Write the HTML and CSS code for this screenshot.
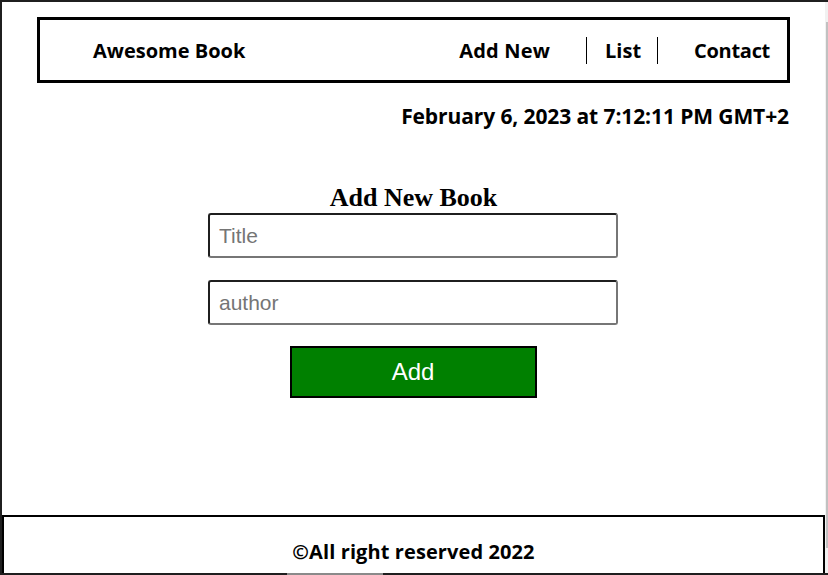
FILE: index.html
```html
<!DOCTYPE html>
<html lang="en">
<head>
<meta charset="utf-8">
<title>Awesome Book</title>
<link rel="stylesheet" href="styles.css">
</head>
<body>
<div class="window">
  <div class="page">
    <header class="header">
      <h1 class="logo">Awesome Book</h1>
      <nav>
        <ul class="nav">
          <li class="nav-item nav-add">Add New</li>
          <li class="nav-item nav-list">List</li>
          <li class="nav-item nav-contact">Contact</li>
        </ul>
      </nav>
    </header>
    <p class="date">February 6, 2023 at 7:12:11 PM GMT+2</p>
    <section class="add-section">
      <h2 class="add-title">Add New Book</h2>
      <form class="form">
        <input class="field" type="text" placeholder="Title">
        <input class="field" type="text" placeholder="author">
        <button class="add-btn" type="button">Add</button>
      </form>
    </section>
    <footer class="footer">
      <p class="copy">©All right reserved 2022</p>
    </footer>
  </div>
  <div class="vscroll"><div class="vthumb"></div></div>
</div>
<div class="hscroll"><div class="hthumb"></div></div>
</body>
</html>
```

FILE: styles.css
```css
* { box-sizing: border-box; }
html, body { margin: 0; padding: 0; }
body {
  width: 828px;
  height: 575px;
  overflow: hidden;
  background: #fff;
  font-family: "Open Sans", "Noto Sans", sans-serif;
  color: #000;
}
.window {
  display: flex;
  height: 573px;
  border-top: 2px solid #1f1f1f;
  border-left: 2px solid #1f1f1f;
}
.page {
  flex: 1;
  display: flex;
  flex-direction: column;
  overflow: hidden;
}
.vscroll {
  width: 3px;
  background: #f1f1f1;
  padding-top: 20px;
}
.vthumb {
  margin-left: 1px;
  width: 2px;
  height: 526px;
  background: #c1c1c1;
}
.hscroll {
  height: 2px;
  background: #1f1f1f;
  padding-left: 287px;
}
.hthumb {
  width: 96px;
  height: 2px;
  background: #8a8a8a;
}
.header {
  margin: 15px 35px 0;
  height: 66px;
  border: 3px solid #000;
  display: flex;
  align-items: center;
  justify-content: space-between;
  padding: 1px 17px 0 53px;
}
.logo {
  margin: 0;
  font-size: 20px;
  font-weight: 700;
}
.nav {
  list-style: none;
  margin: 0;
  padding: 0;
  display: flex;
  align-items: center;
}
.nav-item {
  font-size: 20px;
  font-weight: 700;
  line-height: 27px;
}
.nav-add { padding-right: 36px; border-right: 1px solid #000; letter-spacing: 0.2px; }
.nav-list { padding: 0 16px 0 18px; border-right: 1px solid #000; }
.nav-contact { padding-left: 36px; letter-spacing: -0.3px; }
.date {
  margin: 19px 36px 0 0;
  text-align: right;
  font-size: 21px;
  font-weight: 700;
  line-height: 28px;
  letter-spacing: -0.1px;
}
.add-section {
  display: flex;
  flex-direction: column;
  align-items: center;
  margin-top: 54px;
}
.add-title {
  margin: 0;
  font-family: "Liberation Serif", serif;
  font-size: 26px;
  font-weight: 700;
  line-height: 28px;
}
.form {
  display: flex;
  flex-direction: column;
  align-items: center;
  gap: 22px;
  margin: 1px 1px 0 0;
}
.field {
  width: 410px;
  height: 45px;
  border: 2px solid #1f1f1f;
  border-bottom-color: #767676;
  border-right-color: #767676;
  border-radius: 3px;
  padding: 0 9px;
  font-family: "Liberation Sans", Arial, sans-serif;
  font-size: 21px;
}
.field::placeholder { color: #757575; }
.add-btn {
  width: 247px;
  height: 52px;
  margin-top: -1px;
  background: #008000;
  border: 2px solid #000;
  color: #fff;
  font-family: "Liberation Sans", Arial, sans-serif;
  font-size: 24px;
}
.footer {
  margin-top: auto;
  height: 58px;
  border: 2px solid #000;
  border-bottom: 0;
  display: flex;
  align-items: flex-end;
  justify-content: center;
}
.copy {
  margin: 0 0 8px;
  font-size: 20px;
  font-weight: 700;
  letter-spacing: 0.1px;
}
```
